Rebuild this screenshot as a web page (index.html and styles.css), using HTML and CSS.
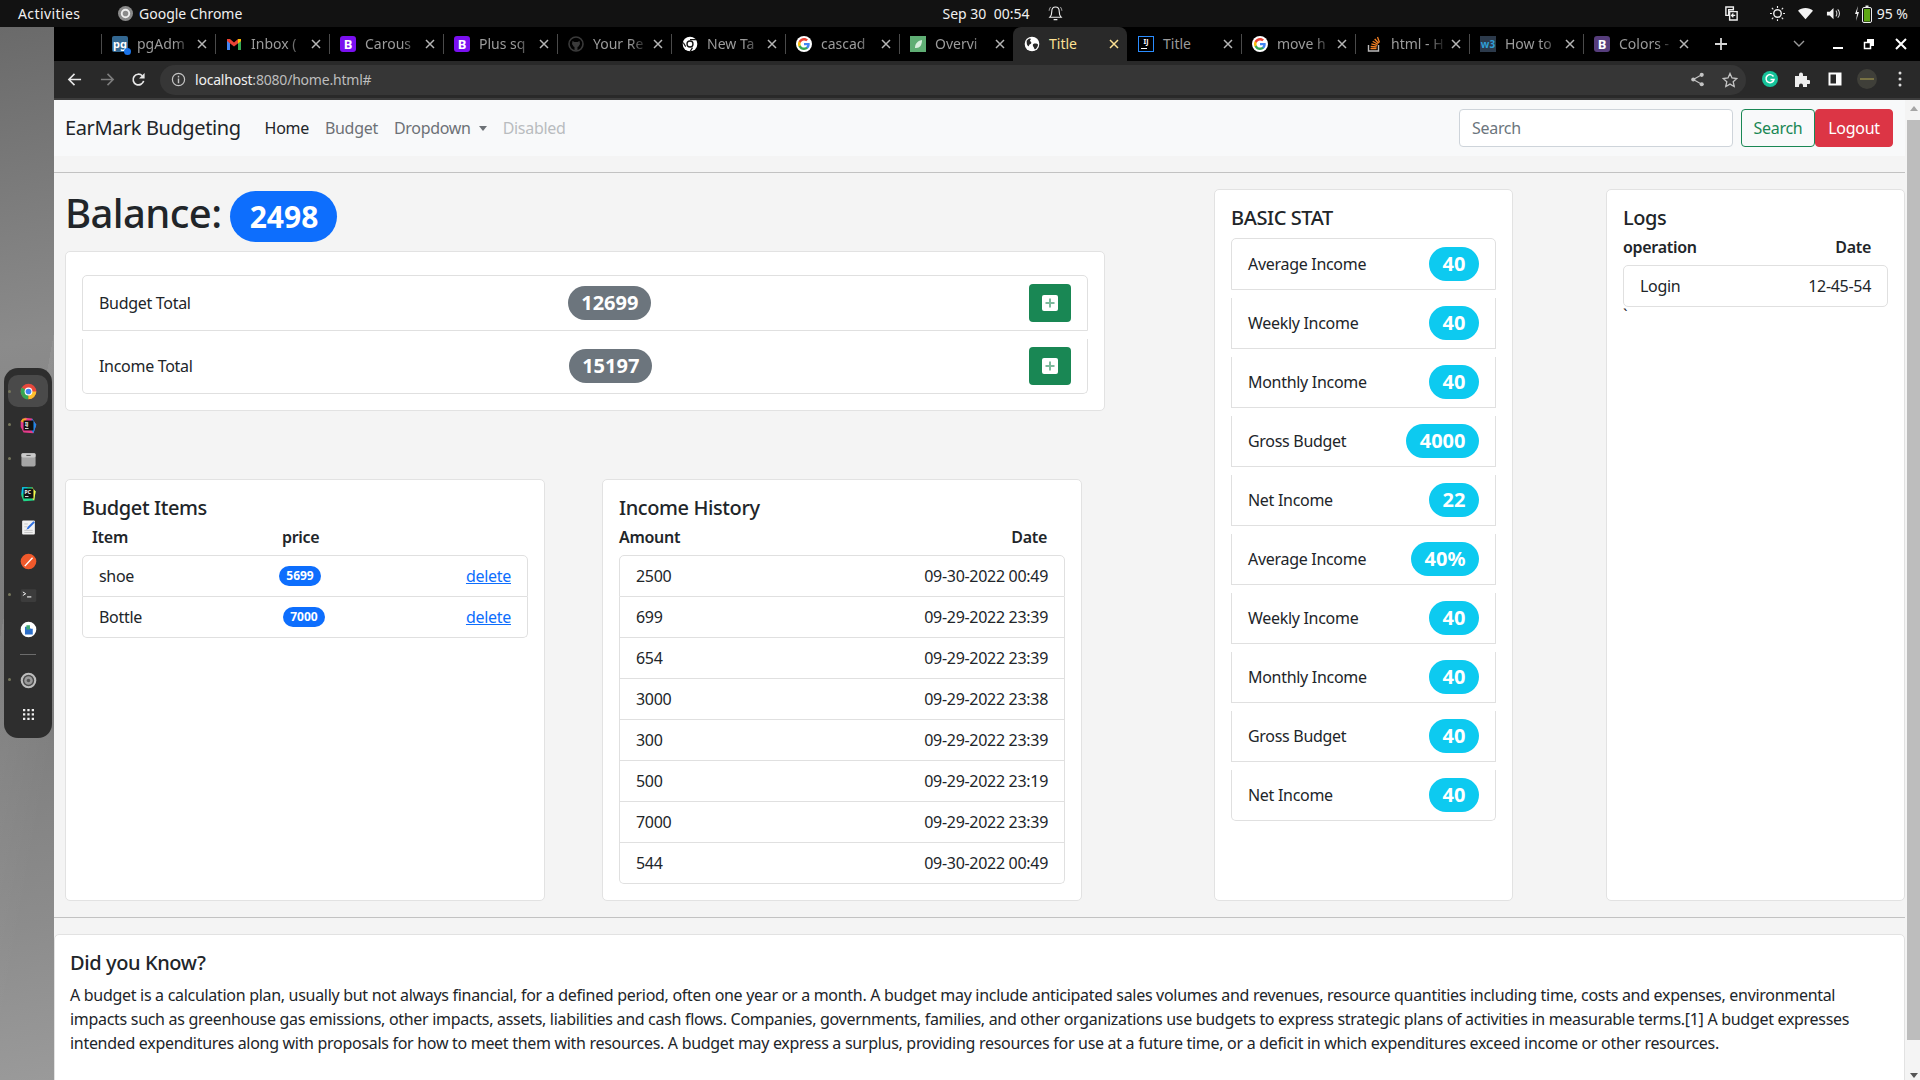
FILE: index.html
```html
<!DOCTYPE html>
<html lang="en">
<head>
<meta charset="utf-8">
<title>EarMark Budgeting</title>
<link rel="stylesheet" href="styles.css">
</head>
<body>
<svg class="defs" width="0" height="0" aria-hidden="true">
  <symbol id="i-google" viewBox="0 0 24 24">
    <circle cx="12" cy="12" r="12" fill="#fff"/>
    <path fill="#4285f4" d="M20.6 12.2c0-.6-.1-1.2-.2-1.8H12v3.4h4.8c-.2 1.1-.8 2-1.8 2.7v2.2h2.900c1.700-1.600 2.700-3.800 2.700-6.500z"/>
    <path fill="#34a853" d="M12 21c2.400 0 4.500-.8 5.900-2.200L15 16.500c-.8.500-1.800.9-3 .9-2.300 0-4.300-1.600-5-3.700H4v2.300C5.500 19 8.500 21 12 21z"/>
    <path fill="#fbbc05" d="M7 13.700c-.4-1.100-.4-2.300 0-3.400V8H4c-1.300 2.500-1.300 5.500 0 8z"/>
    <path fill="#ea4335" d="M12 6.600c1.300 0 2.500.5 3.400 1.300L18 5.400C16.400 3.900 14.400 3 12 3 8.500 3 5.500 5 4 8l3 2.300c.7-2.100 2.700-3.700 5-3.700z"/>
  </symbol>
  <symbol id="i-globe" viewBox="0 0 24 24">
    <circle cx="12" cy="12" r="11" fill="#fff"/>
    <path fill="#292929" d="M4 7c2-1 3-4 6-3 1 1-1 2-1 3s2 1 2 3-2 2-3 3c-1 2-1 3-2 2-2-2-2-5-2-8zM14 12c2-1 6-1 7 1 0 3-3 7-5 7-1-2-1-3-2-4-1-2-1-3 0-4z"/>
  </symbol>
  <symbol id="i-chrome" viewBox="0 0 24 24">
    <circle cx="12" cy="12" r="11" fill="#fff"/>
    <circle cx="12" cy="12" r="5.500" fill="#111"/>
    <circle cx="12" cy="12" r="3.500" fill="#fff"/>
    <path fill="#111" d="M12 6.500h9.500l-1-2H12zM6 15l-3.500-6-1 2L5 17zM15 17l-4 6.500 2.500-.5 3-5z"/>
  </symbol>
  <symbol id="i-x" viewBox="0 0 12 12">
    <path d="M2 2l8 8M10 2l-8 8" fill="none" stroke="currentColor" stroke-width="1.500"/>
  </symbol>
</svg>

<div class="desktop">
  <header class="topbar">
    <div class="top-left">
      <span class="top-activities">Activities</span>
      <span class="top-app">
        <svg class="icon-15" viewBox="0 0 16 16"><circle cx="8" cy="8" r="8" fill="#8a8a8a"/><circle cx="8" cy="8" r="4" fill="none" stroke="#eee" stroke-width="2"/></svg>
        Google Chrome
      </span>
    </div>
    <div class="top-center">
      <span>Sep 30&nbsp; 00:54</span>
      <svg class="icon-bell" viewBox="0 0 16 18"><path d="M8 2c-3 0-4 2-4 5 0 3-1 5-2 6h12c-1-1-2-3-2-6 0-3-1-5-4-5zM6 15.500h4" fill="none" stroke="#eee" stroke-width="1.200"/><path d="M3 2C2 3 1.500 4 1.200 6M13 2c1 1 1.500 2 1.800 4" fill="none" stroke="#eee" stroke-width=".8"/></svg>
    </div>
    <div class="top-right">
      <svg class="icon-15" viewBox="0 0 16 16"><path d="M2 1h8v3H5v6H2zM6 6h8v9H6z" fill="none" stroke="#eee" stroke-width="1.500"/><path d="M12 10H8m2-2l-2 2 2 2" fill="none" stroke="#eee" stroke-width="1.300"/></svg>
      <svg class="icon-15 gap-sun" viewBox="0 0 16 16"><circle cx="8" cy="8" r="4" fill="none" stroke="#eee" stroke-width="1.500"/><path d="M8 0v2M8 14v2M0 8h2M14 8h2M2 2l1.500 1.500M12.500 12.500L14 14M14 2l-1.500 1.500M3.500 12.500L2 14" stroke="#eee" stroke-width="1.200"/></svg>
      <svg class="icon-15" viewBox="0 0 16 16"><path d="M0 5c4-4 12-4 16 0l-8 9z" fill="#f2f2f2"/></svg>
      <svg class="icon-15" viewBox="0 0 16 16"><path d="M1 6h3l4-4v12l-4-4H1z" fill="#f2f2f2"/><path d="M10.500 5c1.500 1.500 1.500 4.500 0 6M12.500 3.500c2.500 2.500 2.500 6.500 0 9" fill="none" stroke="#ddd" stroke-width="1.100"/></svg>
      <span class="battery">
        <svg class="icon-bat" viewBox="0 0 20 18"><path d="M4 1L1 9h2l-1 7 3-9H3z" fill="#eee"/><rect x="8.500" y="2.500" width="9" height="15" rx="1.500" fill="none" stroke="#eee"/><rect x="10" y="4" width="6" height="12.500" fill="#5ea615"/><rect x="11.500" y="0.500" width="3" height="2" fill="#eee"/></svg>
        95 %
      </span>
    </div>
  </header>

  <div class="below-top">
    <aside class="wallpaper">
      <nav class="dock">
        <div class="dock-item dock-active"><span class="dock-dot"></span>
          <svg class="dock-icon" viewBox="0 0 24 24"><circle cx="12" cy="12" r="11" fill="#e6483d"/><path d="M12 12L2.500 17.500A11 11 0 0 0 12 23z" fill="#34a853"/><path d="M12 12L2.500 17.500A11 11 0 0 1 2.500 6.500z" fill="#34a853"/><path d="M12 12h11a11 11 0 0 1-11 11z" fill="#fbc02d"/><circle cx="12" cy="12" r="5.500" fill="#fff"/><circle cx="12" cy="12" r="4" fill="#3f83f2"/></svg>
        </div>
        <div class="dock-item"><span class="dock-dot"></span>
          <svg class="dock-icon" viewBox="0 0 24 24"><path d="M1 6l6-5 10 1 6 9-4 12-14-1-4-8z" fill="#e43c8b"/><path d="M17 2l6 9-4 12-5-8z" fill="#1e88e5"/><path d="M1 6l3-4 6 0-5 6z" fill="#f9a825"/><rect x="5" y="5" width="14" height="14" fill="#111"/><text x="7" y="12.500" class="dock-svg-text">IJ</text><rect x="7" y="15.500" width="5" height="1.200" fill="#fff"/></svg>
        </div>
        <div class="dock-item"><span class="dock-dot"></span>
          <svg class="dock-icon" viewBox="0 0 24 24"><rect x="2" y="3" width="20" height="19" rx="2.500" fill="#a5a5a5"/><rect x="2" y="3" width="20" height="6" rx="2" fill="#c9c9c9"/><rect x="9" y="5.500" width="6" height="1.500" fill="#555"/></svg>
        </div>
        <div class="dock-item">
          <svg class="dock-icon" viewBox="0 0 24 24"><path d="M3 3h14l5 6-2 13-15 1-3-8z" fill="#21d789"/><path d="M17 3l5 6-2 13-6-6z" fill="#fcf84a"/><path d="M3 3h8L2 14z" fill="#07c3f2"/><rect x="5" y="5" width="14" height="14" fill="#111"/><text x="6.500" y="12.500" class="dock-svg-text">PC</text><rect x="7" y="15.500" width="5" height="1.200" fill="#fff"/></svg>
        </div>
        <div class="dock-item">
          <svg class="dock-icon" viewBox="0 0 24 24"><rect x="3" y="2" width="18" height="20" rx="1.500" fill="#f2f2f2"/><path d="M6 16h12M6 19h12M6 7h5M6 11h4" stroke="#b5b5b5"/><path d="M9 15l2-4 8-8 2 2-8 8z" fill="#2f6fe0"/></svg>
        </div>
        <div class="dock-item">
          <svg class="dock-icon" viewBox="0 0 24 24"><circle cx="12" cy="12" r="11" fill="#f0592b"/><path d="M6 18L17 6l1.500 1.500L7.500 19z" fill="#fff"/></svg>
        </div>
        <div class="dock-item"><span class="dock-dot"></span>
          <svg class="dock-icon" viewBox="0 0 24 24"><rect x="1" y="3" width="22" height="18" rx="2" fill="#3c3c3c"/><path d="M4 7l4 2.500L4 12" fill="none" stroke="#fff" stroke-width="1.300"/><path d="M10 14h6" stroke="#fff" stroke-width="1.500"/></svg>
        </div>
        <div class="dock-item">
          <svg class="dock-icon" viewBox="0 0 24 24"><circle cx="12" cy="12" r="11" fill="#fff"/><path d="M7 8h6l2 3h3v8H7z" fill="#2d6fc9"/><path d="M9 6h5v6H9z" fill="#3fa96f"/></svg>
        </div>
        <div class="dock-divider"></div>
        <div class="dock-item"><span class="dock-dot"></span>
          <svg class="dock-icon" viewBox="0 0 24 24"><circle cx="12" cy="12" r="11" fill="#bdbdbd"/><circle cx="12" cy="12" r="8" fill="#4a4a4a"/><circle cx="12" cy="12" r="6" fill="#9a9a9a"/><circle cx="12" cy="12" r="2.500" fill="#555"/></svg>
        </div>
        <div class="dock-item">
          <svg class="dock-grid" viewBox="0 0 12 12"><path d="M0 0h2.500v2.500H0zM4.700 0h2.500v2.500H4.700zM9.500 0H12v2.500H9.500zM0 4.700h2.500v2.500H0zM4.700 4.700h2.500v2.500H4.700zM9.500 4.700H12v2.500H9.500zM0 9.500h2.500V12H0zM4.700 9.500h2.500V12H4.700zM9.500 9.500H12V12H9.500z" fill="#eee"/></svg>
        </div>
      </nav>
    </aside>

    <div class="browser">
      <div class="tabstrip">
        <div class="tab">
          <span class="fav fav-pg">pg<i class="fav-dot"></i></span>
          <span class="tab-text">pgAdm</span>
          <svg class="tab-x"><use href="#i-x"/></svg>
        </div>
        <div class="tab">
          <svg class="fav" viewBox="0 0 16 16"><path d="M1 3v11h3V7z" fill="#4285f4"/><path d="M15 3v11h-3V7z" fill="#34a853"/><path d="M1 3l3 0 4 3.500L12 3h3v2l-7 5.500L1 5z" fill="#ea4335"/><path d="M12 3h3v2l-3 2.500z" fill="#fbbc05"/></svg>
          <span class="tab-text">Inbox (</span>
          <svg class="tab-x"><use href="#i-x"/></svg>
        </div>
        <div class="tab">
          <span class="fav fav-b fav-b-bright">B</span>
          <span class="tab-text">Carous</span>
          <svg class="tab-x"><use href="#i-x"/></svg>
        </div>
        <div class="tab">
          <span class="fav fav-b fav-b-bright">B</span>
          <span class="tab-text">Plus sq</span>
          <svg class="tab-x"><use href="#i-x"/></svg>
        </div>
        <div class="tab">
          <svg class="fav" viewBox="0 0 16 16"><circle cx="8" cy="8" r="7" fill="none" stroke="#3a3a3a" stroke-width="1.600"/><path d="M4.500 5l2 1h3l2-1 .5 3-1.500 2.500-1 .5v3.500H6.500V11l-1-.5L4 8z" fill="#3a3a3a"/></svg>
          <span class="tab-text">Your Re</span>
          <svg class="tab-x"><use href="#i-x"/></svg>
        </div>
        <div class="tab">
          <svg class="fav"><use href="#i-chrome"/></svg>
          <span class="tab-text">New Ta</span>
          <svg class="tab-x"><use href="#i-x"/></svg>
        </div>
        <div class="tab">
          <svg class="fav"><use href="#i-google"/></svg>
          <span class="tab-text">cascad</span>
          <svg class="tab-x"><use href="#i-x"/></svg>
        </div>
        <div class="tab">
          <svg class="fav" viewBox="0 0 16 16"><rect width="16" height="16" fill="#5fae74"/><path d="M5 12c0-4 2-7 7-8 0 5-2 8-6 8z" fill="#d7eedd"/></svg>
          <span class="tab-text">Overvi</span>
          <svg class="tab-x"><use href="#i-x"/></svg>
        </div>
        <div class="tab tab-active">
          <svg class="fav"><use href="#i-globe"/></svg>
          <span class="tab-text tab-text-full">Title</span>
          <svg class="tab-x"><use href="#i-x"/></svg>
        </div>
        <div class="tab tab-after-active">
          <span class="fav fav-ij">IJ<i class="fav-ij-line"></i></span>
          <span class="tab-text tab-text-full">Title</span>
          <svg class="tab-x"><use href="#i-x"/></svg>
        </div>
        <div class="tab">
          <svg class="fav"><use href="#i-google"/></svg>
          <span class="tab-text">move h</span>
          <svg class="tab-x"><use href="#i-x"/></svg>
        </div>
        <div class="tab">
          <svg class="fav" viewBox="0 0 16 16"><path d="M2.500 9v6h10V9" fill="none" stroke="#bcbbbb" stroke-width="1.400"/><path d="M4.500 12.500h6M4.700 10.300l6 .6M5.400 7.800l5.800 1.500M6.700 5.300l5.200 3M8.700 3l4 4.300M11.500 1l2 5.400" stroke="#f48024" stroke-width="1.300"/></svg>
          <span class="tab-text">html - H</span>
          <svg class="tab-x"><use href="#i-x"/></svg>
        </div>
        <div class="tab">
          <span class="fav fav-w3">w3</span>
          <span class="tab-text">How to</span>
          <svg class="tab-x"><use href="#i-x"/></svg>
        </div>
        <div class="tab">
          <span class="fav fav-b fav-b-dark">B</span>
          <span class="tab-text">Colors -</span>
          <svg class="tab-x"><use href="#i-x"/></svg>
        </div>
        <svg class="strip-plus" viewBox="0 0 14 14"><path d="M7 1v12M1 7h12" stroke="#d6d6d6" stroke-width="1.800"/></svg>
        <svg class="strip-chev" viewBox="0 0 12 8"><path d="M1 1l5 5 5-5" fill="none" stroke="#9a9a9a" stroke-width="1.400"/></svg>
        <svg class="win-min" viewBox="0 0 12 12"><path d="M1 10h10" stroke="#fff" stroke-width="2"/></svg>
        <svg class="win-max" viewBox="0 0 12 12"><path d="M4 1h7v7H8V4H4z" fill="#fff"/><path d="M1.500 4.500h6v6h-6z" fill="none" stroke="#fff" stroke-width="1.500"/></svg>
        <svg class="win-close" viewBox="0 0 12 12"><path d="M1 1l10 10M11 1L1 11" stroke="#fff" stroke-width="2"/></svg>
      </div>

      <div class="toolbar">
        <svg class="tool back" viewBox="0 0 16 16"><path d="M15 8H2m6-6L2 8l6 6" fill="none" stroke="#e8e8e8" stroke-width="1.700"/></svg>
        <svg class="tool fwd" viewBox="0 0 16 16"><path d="M1 8h13M8 2l6 6-6 6" fill="none" stroke="#7d7d7d" stroke-width="1.700"/></svg>
        <svg class="tool reload" viewBox="0 0 16 16"><path d="M13.500 9.500A5.700 5.700 0 1 1 12 4" fill="none" stroke="#e8e8e8" stroke-width="1.800"/><path d="M14.500 1v6h-6z" fill="#e8e8e8"/></svg>
        <div class="omnibox">
          <svg class="info" viewBox="0 0 16 16"><circle cx="8" cy="8" r="6.500" fill="none" stroke="#c4c4c4" stroke-width="1.300"/><path d="M8 7v5M8 4v1.800" stroke="#c4c4c4" stroke-width="1.500"/></svg>
          <span class="url"><b class="url-host">localhost</b>:8080/home.html#</span>
          <svg class="omni-share" viewBox="0 0 16 16"><circle cx="12.500" cy="3" r="2.200" fill="#c4c4c4"/><circle cx="12.500" cy="13" r="2.200" fill="#c4c4c4"/><circle cx="3.500" cy="8" r="2.200" fill="#c4c4c4"/><path d="M12.500 3l-9 5 9 5" fill="none" stroke="#c4c4c4" stroke-width="1.200"/></svg>
          <svg class="omni-star" viewBox="0 0 16 16"><path d="M8 1.500l2 4.500 4.800.5-3.600 3.200 1 4.800L8 12.100l-4.200 2.400 1-4.800L1.200 6.500 6 6z" fill="none" stroke="#c4c4c4" stroke-width="1.300"/></svg>
        </div>
        <svg class="ext ext-g" viewBox="0 0 16 16"><circle cx="8" cy="8" r="8" fill="#15c39a"/><path d="M11.500 5.500A4 4 0 1 0 12 8.500H8.500" fill="none" stroke="#fff" stroke-width="1.500"/></svg>
        <svg class="ext ext-puzzle" viewBox="0 0 16 16"><path d="M1 5h4V3.500a2 2 0 0 1 4 0V5h4v4h1.500a2 2 0 0 1 0 4H13v3H9v-1.500a2 2 0 0 0-4 0V16H1z" fill="#eee"/></svg>
        <svg class="ext ext-panel" viewBox="0 0 16 16"><path d="M1.500 1.500h13v13h-13z" fill="#fff"/><rect x="3.500" y="3.500" width="5.500" height="9" fill="#292929"/></svg>
        <svg class="ext avatar" viewBox="0 0 20 20"><circle cx="10" cy="10" r="10" fill="#3f3f39"/><path d="M3 10h14" stroke="#8d8449" stroke-width="1.500"/></svg>
        <svg class="ext kebab" viewBox="0 0 4 16"><circle cx="2" cy="2" r="1.500" fill="#ddd"/><circle cx="2" cy="8" r="1.500" fill="#ddd"/><circle cx="2" cy="14" r="1.500" fill="#ddd"/></svg>
      </div>

      <div class="viewport">
        <div class="content">
          <nav class="navbar">
            <a class="brand">EarMark Budgeting</a>
            <a class="nav-link nav-home">Home</a>
            <a class="nav-link">Budget</a>
            <a class="nav-link nav-drop">Dropdown<i class="caret"></i></a>
            <a class="nav-link nav-disabled">Disabled</a>
            <form class="nav-form">
              <input class="search-input" type="text" placeholder="Search">
              <button class="btn btn-search" type="button">Search</button>
              <button class="btn btn-logout" type="button">Logout</button>
            </form>
          </nav>
          <hr class="rule">

          <main class="main-grid">
            <section class="left-col">
              <h1 class="balance">Balance: <span class="badge badge-blue">2498</span></h1>
              <div class="card totals">
                <div class="list">
                  <div class="item item-gap">
                    <span>Budget Total</span>
                    <span class="badge badge-gray">12699</span>
                    <button class="btn-add" type="button"><svg viewBox="0 0 16 16"><rect width="16" height="16" rx="2" fill="#fff"/><path d="M8 3.500v9M3.500 8h9" stroke="#7dba9d" stroke-width="2"/></svg></button>
                  </div>
                  <div class="item item-gap">
                    <span>Income Total</span>
                    <span class="badge badge-gray">15197</span>
                    <button class="btn-add" type="button"><svg viewBox="0 0 16 16"><rect width="16" height="16" rx="2" fill="#fff"/><path d="M8 3.500v9M3.500 8h9" stroke="#7dba9d" stroke-width="2"/></svg></button>
                  </div>
                </div>
              </div>
              <div class="lower-row">
                <div class="card card-half">
                  <h5 class="card-title">Budget Items</h5>
                  <div class="head head-budget"><span>Item</span><span class="head-price">price</span></div>
                  <div class="list">
                    <div class="item item-tight">
                      <span>shoe</span>
                      <span class="badge badge-small">5699</span>
                      <a class="link">delete</a>
                    </div>
                    <div class="item item-tight">
                      <span>Bottle</span>
                      <span class="badge badge-small">7000</span>
                      <a class="link">delete</a>
                    </div>
                  </div>
                </div>
                <div class="card card-half">
                  <h5 class="card-title">Income History</h5>
                  <div class="head head-income"><span>Amount</span><span>Date</span></div>
                  <div class="list">
                    <div class="item item-tight"><span>2500</span><span>09-30-2022 00:49</span></div>
                    <div class="item item-tight"><span>699</span><span>09-29-2022 23:39</span></div>
                    <div class="item item-tight"><span>654</span><span>09-29-2022 23:39</span></div>
                    <div class="item item-tight"><span>3000</span><span>09-29-2022 23:38</span></div>
                    <div class="item item-tight"><span>300</span><span>09-29-2022 23:39</span></div>
                    <div class="item item-tight"><span>500</span><span>09-29-2022 23:19</span></div>
                    <div class="item item-tight"><span>7000</span><span>09-29-2022 23:39</span></div>
                    <div class="item item-tight"><span>544</span><span>09-30-2022 00:49</span></div>
                  </div>
                </div>
              </div>
            </section>

            <section class="card card-stat">
              <h5 class="card-title">BASIC STAT</h5>
              <div class="list">
                <div class="item item-gap"><span>Average Income</span><span class="badge badge-cyan">40</span></div>
                <div class="item item-gap"><span>Weekly Income</span><span class="badge badge-cyan">40</span></div>
                <div class="item item-gap"><span>Monthly Income</span><span class="badge badge-cyan">40</span></div>
                <div class="item item-gap"><span>Gross Budget</span><span class="badge badge-cyan">4000</span></div>
                <div class="item item-gap"><span>Net Income</span><span class="badge badge-cyan">22</span></div>
                <div class="item item-gap"><span>Average Income</span><span class="badge badge-cyan">40%</span></div>
                <div class="item item-gap"><span>Weekly Income</span><span class="badge badge-cyan">40</span></div>
                <div class="item item-gap"><span>Monthly Income</span><span class="badge badge-cyan">40</span></div>
                <div class="item item-gap"><span>Gross Budget</span><span class="badge badge-cyan">40</span></div>
                <div class="item item-gap"><span>Net Income</span><span class="badge badge-cyan">40</span></div>
              </div>
            </section>

            <section class="card card-logs">
              <h5 class="card-title">Logs</h5>
              <div class="head head-logs"><span>operation</span><span>Date</span></div>
              <div class="list">
                <div class="item item-tight"><span>Login</span><span>12-45-54</span></div>
              </div>
              <div class="tick">`</div>
            </section>
          </main>

          <hr class="rule">

          <section class="card card-know">
            <h5 class="card-title">Did you Know?</h5>
            <p class="know-text">A budget is a calculation plan, usually but not always financial, for a defined period, often one year or a month. A budget may include anticipated sales volumes and revenues, resource quantities including time, costs and expenses, environmental impacts such as greenhouse gas emissions, other impacts, assets, liabilities and cash flows. Companies, governments, families, and other organizations use budgets to express strategic plans of activities in measurable terms.[1] A budget expresses intended expenditures along with proposals for how to meet them with resources. A budget may express a surplus, providing resources for use at a future time, or a deficit in which expenditures exceed income or other resources.</p>
          </section>
        </div>
        <div class="scrollbar">
          <i class="sb-up"></i>
          <div class="sb-thumb"></div>
          <i class="sb-down"></i>
        </div>
      </div>
    </div>
  </div>
</div>
</body>
</html>
```

FILE: styles.css
```css
* { box-sizing: border-box; }
html, body { margin: 0; padding: 0; }
body {
  width: 1920px;
  height: 1080px;
  overflow: hidden;
  font-family: "Noto Sans", "Open Sans", sans-serif;
  font-size: 16px;
  line-height: 24px;
  color: #212529;
  background: #111;
}
.defs { position: absolute; }
.desktop { width: 1920px; height: 1080px; display: flex; flex-direction: column; overflow: hidden; }

/* top bar */
.topbar {
  height: 27px;
  flex: none;
  background: #121212;
  color: #f0f0f0;
  font-size: 14px;
  display: grid;
  grid-template-columns: 1fr auto 1fr;
  align-items: center;
}
.top-left { display: flex; align-items: center; padding-left: 18px; }
.top-activities { width: 100px; letter-spacing: .4px; }
.top-app { display: flex; align-items: center; gap: 6px; }
.icon-15 { width: 15px; height: 15px; }
.top-center { display: flex; align-items: center; gap: 19px; padding-left: 86px; }
.icon-bell { width: 15px; height: 17px; }
.top-right { display: flex; justify-content: flex-end; align-items: center; gap: 13px; padding-right: 12px; }
.gap-sun { margin-left: 18px; }
.battery { display: flex; align-items: center; gap: 3px; }
.icon-bat { width: 20px; height: 18px; }

/* desktop left */
.below-top { flex: 1; display: flex; min-height: 0; }
.wallpaper {
  width: 54px;
  flex: none;
  background:
    linear-gradient(100deg, rgba(255,255,255,0) 45%, rgba(255,255,255,.06) 45%, rgba(255,255,255,0) 75%),
    linear-gradient(170deg, #6a6a6a 0%, #8b8b8b 30%, #7a7a7a 60%, #8c8c8c 85%, #9a9a9a 100%);
  padding: 341px 2px 0 4px;
}
.dock {
  width: 48px;
  height: 370px;
  background: #2e2e2e;
  border-radius: 14px;
  display: flex;
  flex-direction: column;
  align-items: center;
  padding-top: 7px;
}
.dock-item { width: 40px; height: 34px; display: flex; align-items: center; justify-content: center; position: relative; flex: none; }
.dock-active { background: #4a4a4a; border-radius: 10px; height: 32px; margin-bottom: 1px; }
.dock-icon { width: 17px; height: 17px; }
.dock-grid { width: 11px; height: 11px; }
.dock-dot { position: absolute; left: 0; top: 15px; width: 3px; height: 3px; border-radius: 50%; background: #77775c; }
.dock-divider { width: 16px; height: 1px; background: #6c6c6c; margin: 8px 0; }
.dock-svg-text { font-size: 7px; font-weight: 700; fill: #fff; }

/* tabs */
.browser { flex: 1; display: flex; flex-direction: column; min-width: 0; }
.tabstrip {
  height: 34px;
  flex: none;
  background: #000;
  display: flex;
  align-items: stretch;
  padding-left: 47px;
  position: relative;
}
.tab {
  width: 114px;
  flex: none;
  display: flex;
  align-items: center;
  padding-left: 11px;
  color: #9b9b9b;
  font-size: 14px;
  position: relative;
}
.tab::before {
  content: "";
  position: absolute;
  left: 0;
  top: 7px;
  bottom: 7px;
  width: 1px;
  background: #4a4a4a;
}
.tab-active::before, .tab-after-active::before { display: none; }
.tab-active {
  background: #292929;
  color: #fde293;
  border-radius: 8px 8px 0 0;
}
.fav {
  width: 16px;
  height: 16px;
  flex: none;
  margin-right: 9px;
  position: relative;
  display: flex;
  align-items: center;
  justify-content: center;
  font-style: normal;
}
.fav-pg { background: #336791; color: #fff; border-radius: 2px; font-size: 11px; font-weight: 700; line-height: 14px; }
.fav-dot { position: absolute; right: -3px; bottom: -3px; width: 7px; height: 7px; background: #1a73e8; border-radius: 50%; }
.fav-b { color: #fff; border-radius: 3px; font-size: 13px; font-weight: 700; }
.fav-b-bright { background: #7a10f0; }
.fav-b-dark { background: #563d7c; }
.fav-ij { border: 1px solid #2a8cff; background: #000; color: #fff; font-size: 7px; font-weight: 700; align-items: flex-start; line-height: 9px; }
.fav-ij-line { position: absolute; left: 2px; bottom: 2px; width: 6px; height: 1px; background: #fff; }
.fav-w3 { background: #2c3a4b; color: #2f9fd8; font-size: 10px; font-weight: 700; }
.tab-text {
  width: 53px;
  white-space: nowrap;
  -webkit-mask-image: linear-gradient(90deg, #000 70%, rgba(0,0,0,.15) 100%);
  mask-image: linear-gradient(90deg, #000 70%, rgba(0,0,0,.15) 100%);
}
.tab-text-full { -webkit-mask-image: none; mask-image: none; }
.tab-x { width: 12px; height: 12px; margin-left: 6px; flex: none; color: #b5b5b5; }
.tab-active .tab-x { color: #fde293; }
.strip-plus { width: 14px; height: 14px; align-self: center; margin-left: 17px; }
.strip-chev { width: 12px; height: 8px; align-self: center; margin-left: 65px; }
.win-min { width: 12px; height: 12px; align-self: center; margin-left: 27px; }
.win-max { width: 12px; height: 12px; align-self: center; margin-left: 19px; }
.win-close { width: 12px; height: 12px; align-self: center; margin-left: 20px; }

/* toolbar */
.toolbar {
  height: 39px;
  flex: none;
  background: #292929;
  border-bottom: 2px solid #3d3d3d;
  display: flex;
  align-items: center;
  padding-left: 13px;
}
.tool { width: 15px; height: 15px; flex: none; }
.fwd { margin-left: 18px; }
.reload { margin-left: 16px; }
.omnibox {
  width: 1586px;
  height: 30px;
  margin-left: 14px;
  background: #363636;
  border-radius: 15px;
  display: flex;
  align-items: center;
  padding-left: 11px;
  font-size: 14px;
  letter-spacing: -.2px;
  color: #bdbdbd;
}
.info { width: 15px; height: 15px; }
.url { margin-left: 9px; width: 1481px; }
.url-host { font-weight: 400; color: #f0f0f0; }
.omni-share { width: 15px; height: 15px; margin-left: 14px; }
.omni-star { width: 16px; height: 16px; margin-left: 17px; }
.ext { width: 16px; height: 16px; flex: none; margin-left: 15px; margin-top: -1px; }
.ext-g { margin-left: 16px; }
.ext-puzzle { margin-left: 16px; }
.ext-panel { margin-left: 17px; }
.avatar { width: 20px; height: 20px; margin-left: 14px; }
.kebab { width: 4px; height: 16px; margin-left: 21px; }

/* page */
.viewport { flex: 1; display: flex; min-height: 0; background: #f4f4f4; letter-spacing: -.3px; }
.content { width: 1851px; flex: none; }
.scrollbar { width: 15px; flex: none; background: #f4f4f4; display: flex; flex-direction: column; align-items: flex-end; }
.sb-up { width: 0; height: 0; border: 4px solid transparent; border-bottom: 5px solid #a5a5a5; border-top: 0; margin: 6px 2px 9px 0; }
.sb-thumb { width: 13px; height: 920px; background: #bdbdbd; }
.sb-down { width: 0; height: 0; border: 4px solid transparent; border-top: 5px solid #555; border-bottom: 0; margin: 33px 2px 0 0; }

.navbar {
  height: 56px;
  background: #f8f9fa;
  display: flex;
  align-items: center;
  padding: 0 12px 0 11px;
}
.brand { font-size: 20px; color: #212529; margin-right: 24px; letter-spacing: -.4px; }
.nav-link { color: #6d7176; margin-right: 16px; }
.nav-home { color: #212529; }
.nav-drop { margin-right: 16px; }
.caret { display: inline-block; width: 0; height: 0; margin-left: 8px; vertical-align: 3px; border-top: 5px solid #6d7176; border-left: 4.500px solid transparent; border-right: 4.500px solid transparent; }
.nav-disabled { color: #b9bcbf; }
.nav-form { margin-left: auto; display: flex; align-items: center; }
.search-input {
  width: 274px;
  height: 38px;
  margin-right: 8px;
  padding: 0 12px;
  font: inherit;
  letter-spacing: inherit;
  color: #212529;
  background: #fff;
  border: 1px solid #ced4da;
  border-radius: 4px;
}
.search-input::placeholder { color: #6c757d; opacity: 1; }
.btn { height: 38px; padding: 0 11px; font: inherit; letter-spacing: inherit; border-radius: 4px; border: 1px solid transparent; }
.btn-search { color: #198754; border-color: #198754; background: transparent; width: 74px; }
.btn-logout { color: #fff; background: #dc3545; border-color: #dc3545; width: 78px; }

.rule { margin: 16px 0; border: 0; height: 1px; background: #c2c2c2; }

.main-grid {
  height: 712px;
  padding-left: 11px;
  display: flex;
}
.card { background: #fff; border: 1px solid #e2e2e2; border-radius: 5px; padding: 16px; }
.card-title { font-size: 20px; line-height: 24px; font-weight: 500; margin: 0 0 8px; letter-spacing: -.4px; }
.head { display: flex; justify-content: space-between; font-weight: 600; line-height: 19px; margin-bottom: 8px; }
.head-budget { justify-content: flex-start; padding-left: 10px; }
.head-price { margin-left: 154px; }
.head-income { padding-right: 18px; }
.head-logs { padding-right: 17px; }

.left-col { width: 1040px; flex: none; display: flex; flex-direction: column; }
.card-stat { width: 299px; flex: none; margin-left: 109px; }
.card-logs { width: 299px; flex: none; margin-left: 93px; }
.balance { margin: 0; height: 62px; font-size: 40px; line-height: 48px; font-weight: 500; display: flex; align-items: flex-start; letter-spacing: -.6px; }
.badge { display: inline-flex; align-items: center; justify-content: center; font-weight: 700; color: #fff; border-radius: 999px; flex: none; letter-spacing: 0; }
.badge-blue { margin: 2px 0 0 9px; height: 51px; width: 107px; font-size: 30px; background: #0d6efd; }
.badge-gray { height: 34px; padding: 0 13px; font-size: 20px; background: #6c757d; }
.badge-cyan { height: 34px; padding: 0 13.500px; font-size: 20px; background: #0dcaf0; }
.badge-small { height: 20px; padding: 0 7.500px; font-size: 12px; background: #0d6efd; }

.totals { height: 160px; padding: 23px 16px 15px; }
.list { display: flex; flex-direction: column; }
.item {
  display: flex;
  justify-content: space-between;
  align-items: center;
  background: #fff;
  border: 1px solid #e0e0e0;
  border-top: 0;
  padding: 8px 16px;
}
.list > .item:first-child { border-top: 1px solid #e0e0e0; border-radius: 5px 5px 0 0; }
.list > .item:last-child { border-radius: 0 0 5px 5px; }
.list > .item:only-child { border-radius: 5px; }
.item-gap { margin-bottom: 8px; }
.item-gap:last-child { margin-bottom: 0; }
.item-tight { height: 41px; padding: 0 16px; }
.list > .item-tight:first-child { height: 42px; }
.btn-add { width: 42px; height: 38px; padding: 0; border: 0; border-radius: 4px; background: #198754; display: flex; align-items: center; justify-content: center; }
.btn-add svg { width: 16px; height: 16px; }

.lower-row { margin-top: 68px; flex: 1; display: flex; gap: 57px; min-height: 0; }
.card-half { width: 480px; flex: none; }
.link { color: #0d6efd; text-decoration: underline; }
.tick { line-height: 16px; height: 16px; }

.card-know { height: 160px; padding-left: 15px; }
.know-text { margin: 0; }
```
